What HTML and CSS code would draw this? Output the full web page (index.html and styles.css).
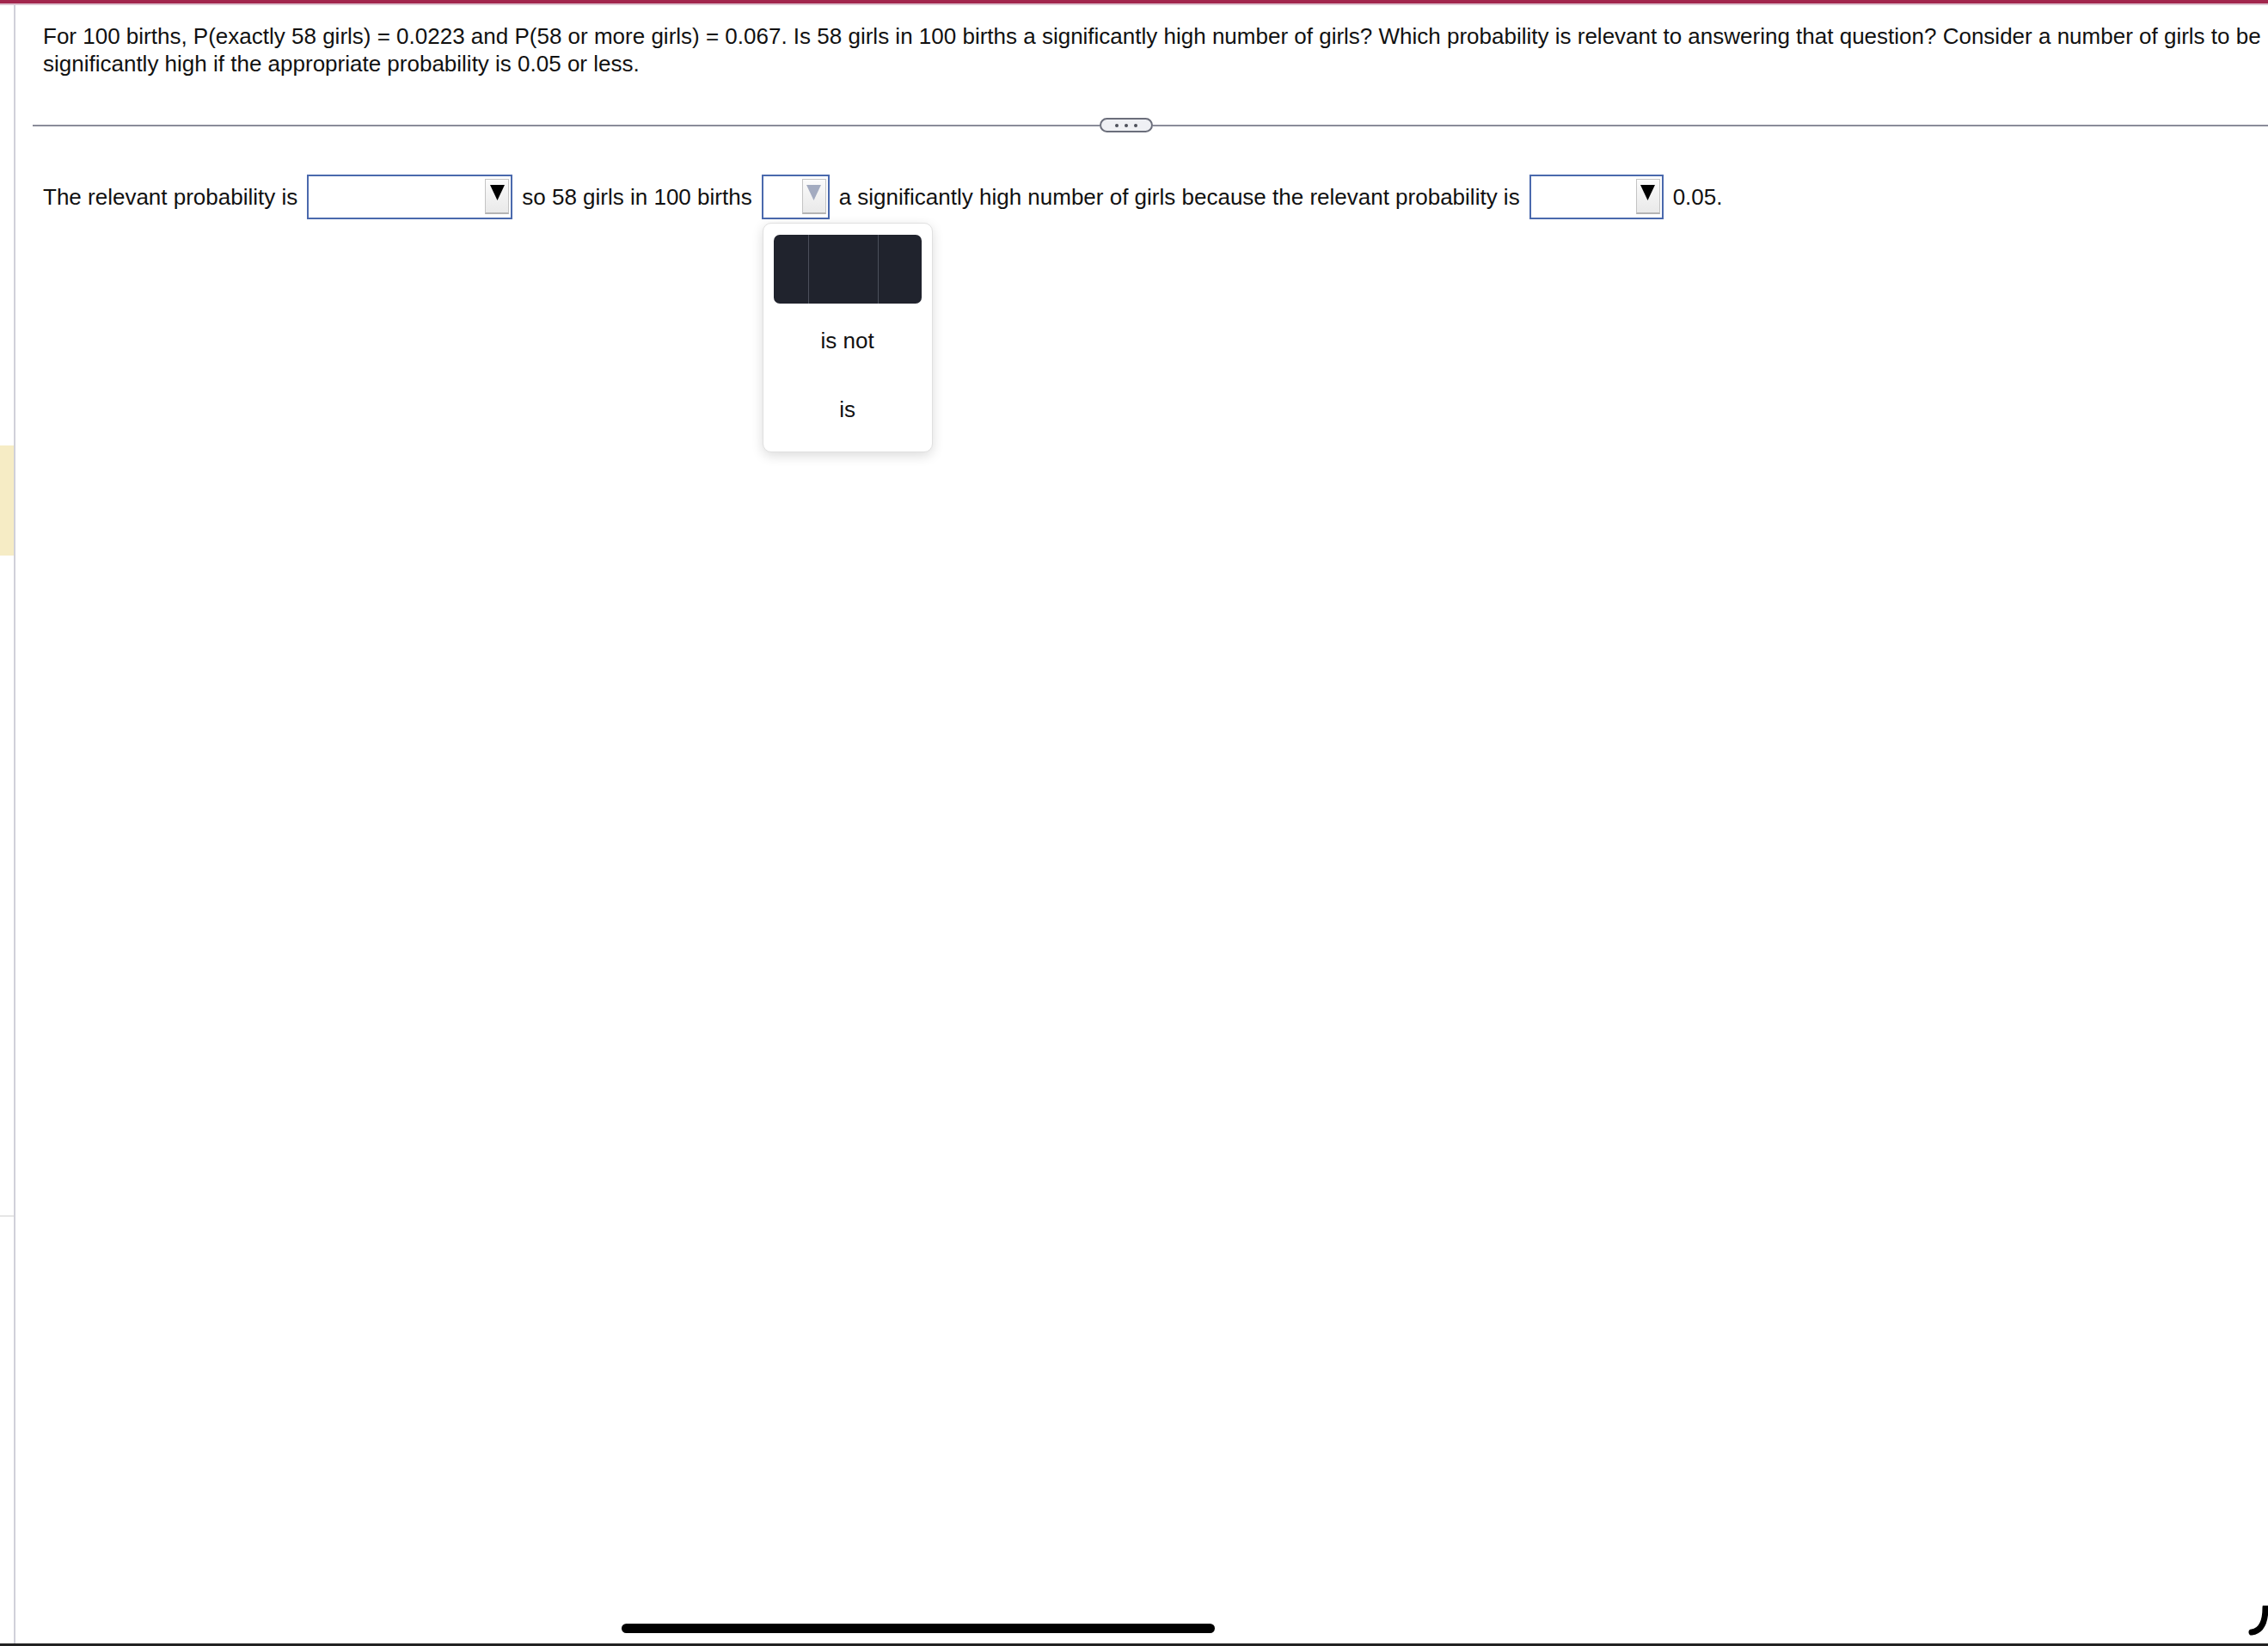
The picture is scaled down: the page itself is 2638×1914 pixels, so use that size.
FILE: index.html
```html
<!DOCTYPE html>
<html lang="en">
<head>
    <meta charset="UTF-8">
    <meta name="viewport" content="width=device-width, initial-scale=1.0">
    <title>Significantly High Number of Girls</title>
    <link rel="stylesheet" href="styles.css">
</head>
<body>
    <div class="top-bar"></div>

    <div class="page">
        <div class="side">
            <div class="side-mark"></div>
            <div class="side-rule"></div>
        </div>

        <div class="main">
            <p class="question">For 100 births, P(exactly 58 girls) = 0.0223 and P(58 or more girls) = 0.067. Is 58 girls in 100 births a significantly high number of girls? Which probability is relevant to answering that question? Consider a number of girls to be significantly high if the appropriate probability is 0.05 or less.</p>

            <div class="divider">
                <div class="rule rule-left"></div>
                <button class="more-button" aria-label="More">
                    <span class="dot"></span><span class="dot"></span><span class="dot"></span>
                </button>
                <div class="rule rule-right"></div>
            </div>

            <div class="answer">
                <span>The relevant probability is</span>
                <div class="dropdown dropdown-wide">
                    <span class="arrow-button">
                        <svg width="17" height="18" viewBox="0 0 17 18"><polygon points="0,0 17,0 8.5,18" fill="#000"/></svg>
                    </span>
                </div>
                <span>so 58 girls in 100 births</span>
                <div class="dropdown dropdown-small open">
                    <span class="arrow-button">
                        <svg width="17" height="18" viewBox="0 0 17 18"><polygon points="0,0 17,0 8.5,18" fill="#a3abc0"/></svg>
                    </span>

                    <!-- open choice list -->
                    <div class="choice-menu">
                        <div class="choice-toolbar">
                            <div class="tool tool-a"></div>
                            <div class="tool tool-b"></div>
                            <div class="tool tool-c"></div>
                        </div>
                        <div class="choice">is not</div>
                        <div class="choice">is</div>
                    </div>
                </div>
                <span>a significantly high number of girls because the relevant probability is</span>
                <div class="dropdown dropdown-mid">
                    <span class="arrow-button">
                        <svg width="17" height="18" viewBox="0 0 17 18"><polygon points="0,0 17,0 8.5,18" fill="#000"/></svg>
                    </span>
                </div>
                <span>0.05.</span>
            </div>
        </div>
    </div>

    <div class="bottom-line"></div>

    <div class="home-bar"></div>
    <svg class="corner" width="24" height="36" viewBox="0 0 24 36">
        <path d="M21 2 Q21 29 5 31" fill="none" stroke="#000" stroke-width="7" stroke-linecap="round"/>
    </svg>
</body>
</html>
```

FILE: styles.css
```css
* {
    box-sizing: border-box;
}
html, body {
    margin: 0;
    height: 100%;
}
body {
    font-family: "Liberation Sans", Arial, sans-serif;
    font-size: 26px;
    line-height: 32px;
    color: #111;
    background-color: #fff;
    display: flex;
    flex-direction: column;
    position: relative;
    overflow: hidden;
}
.top-bar {
    flex: none;
    height: 6px;
    background-color: #a2264d;
    border-bottom: 2px solid #dcc3cf;
}
.page {
    flex: 1;
    display: flex;
}
.side {
    flex: none;
    width: 16px;
    display: flex;
    flex-direction: column;
}
.side-mark {
    margin-top: 512px;
    height: 128px;
    background-color: #f6ecc5;
}
.side-rule {
    margin-top: 767px;
    height: 2px;
    background-color: #e6e6e6;
}
.main {
    flex: 1;
    border-left: 2px solid #d0d0d9;
    padding-left: 20px;
}
.question {
    margin: 20px 0 0;
    padding: 0 2px 0 12px;
}
.divider {
    display: flex;
    align-items: center;
    height: 17px;
    margin-top: 47px;
}
.rule {
    height: 2px;
    background-color: #8a8c99;
}
.rule-left {
    width: 1241px;
}
.rule-right {
    flex: 1;
}
.more-button {
    width: 62px;
    height: 17px;
    padding: 0;
    border: 2px solid #6b6e7b;
    border-radius: 9px;
    background-color: #eff0f4;
    display: flex;
    align-items: center;
    justify-content: center;
    gap: 7px;
}
.dot {
    width: 4px;
    height: 4px;
    border-radius: 50%;
    background-color: #4d505a;
}
.answer {
    display: flex;
    align-items: center;
    gap: 11px;
    margin-top: 49px;
    padding-left: 12px;
}
.dropdown {
    position: relative;
    height: 52px;
    border: 2px solid #4a69ad;
    background-color: #fff;
    display: flex;
    justify-content: flex-end;
    align-items: flex-start;
    padding: 3px 2px 0 0;
}
.dropdown-wide {
    width: 239px;
}
.dropdown-small {
    width: 79px;
}
.dropdown-mid {
    width: 156px;
}
.arrow-button {
    width: 28px;
    height: 41px;
    border: 1px solid #c4c4c4;
    border-bottom: 2px solid #b4b4b4;
    background: linear-gradient(#fbfbfb, #e9e9e9);
    display: flex;
    justify-content: center;
    padding-top: 6px;
}
.choice-menu {
    position: absolute;
    top: 54px;
    left: -1px;
    width: 198px;
    height: 267px;
    background-color: #fff;
    border: 1px solid #e0e0e0;
    border-radius: 10px;
    box-shadow: 0 4px 14px rgba(0,0,0,0.14);
    padding: 13px 12px;
    text-align: center;
    z-index: 10;
}
.choice-toolbar {
    display: flex;
    height: 80px;
    background-color: #20232d;
    border-radius: 7px;
    overflow: hidden;
}
.tool-a {
    width: 40px;
}
.tool-b {
    width: 82px;
    border-left: 1px solid #4b4f5b;
    border-right: 1px solid #4b4f5b;
}
.tool-c {
    flex: 1;
}
.choice {
    padding: 27px 0 21px;
}
.bottom-line {
    flex: none;
    height: 3px;
    background-color: #222;
}
.home-bar {
    position: absolute;
    left: 723px;
    bottom: 15px;
    width: 690px;
    height: 11px;
    border-radius: 6px;
    background-color: #000;
}
.corner {
    position: absolute;
    right: 0;
    bottom: 11px;
}
```
